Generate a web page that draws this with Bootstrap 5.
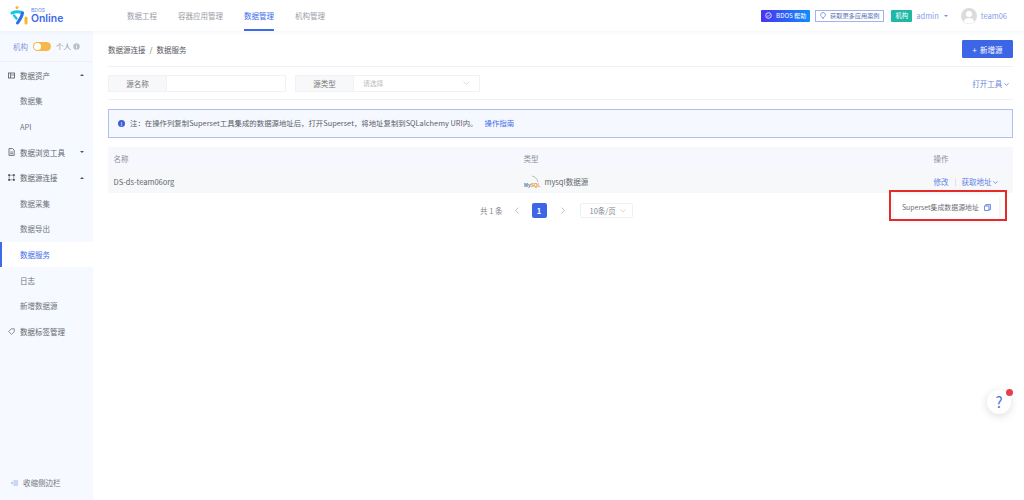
<!DOCTYPE html>
<html lang="zh">
<head>
<meta charset="utf-8">
<title>数据服务</title>
<link rel="stylesheet" href="https://cdn.jsdelivr.net/npm/bootstrap@5.3.0/dist/css/bootstrap.min.css">
<style>
html,body{height:500px;overflow:hidden}
body{font-family:"Noto Sans CJK SC","Noto Sans",sans-serif;font-size:7.5px;color:#55585f;background:#fff;line-height:1.2}
.app-top{height:31px;background:#fff;position:relative;z-index:2;box-shadow:0 1px 5px rgba(60,100,200,.07)}
.logo-box{width:127px;padding-left:10px}
.logo-name{font-family:"Inter",sans-serif;font-size:10.4px;font-weight:600;color:#3d6bea;line-height:10px}
.logo-sup{font-family:"Inter",sans-serif;font-size:5px;color:#5f86ee;line-height:5px;margin-bottom:1px}
.top-nav{gap:21px}
.top-link{height:31px;line-height:32px;color:#999da6;font-size:7.5px;flex:none;text-decoration:none}
.top-link span{display:inline-block;height:31px}
.top-link.on{color:#3d6bea}
.top-link.on span{border-bottom:2px solid #3d6bea}
.help-tag{height:12px;width:49px;background:linear-gradient(90deg,#4a34ee,#0f8dff);color:#fff;border-radius:1px;font-size:6.2px}
.case-tag{height:12px;width:69px;border:1px solid #9fb3f0;color:#5a6fb0;font-size:6.2px;margin-left:5px}
.org-tag{height:12px;width:21px;background:#1fb8a6;color:#fff;border-radius:1px;font-size:6.4px;margin-left:7px}
.user-name{color:#8a9de6;font-size:7.5px}
.avatar{width:16px;height:16px;border-radius:50%;background:#dcdcdc}
.side-bar{width:93px;flex:none;background:#f6f9ff;height:469px;position:relative}
.side-switch{height:31px;border-bottom:1px solid #eef1f8;color:#8c98c4}
.switch-track{width:18px;height:9px;border-radius:5px;background:#f7b84a;position:relative;margin:0 5px}
.switch-track i{position:absolute;left:1px;top:1px;width:7px;height:7px;border-radius:50%;background:#fff}
.side-row{height:25.6px;color:#70737b;padding-left:20px;font-size:7.5px}
.side-row.top{padding-left:8px;color:#63666e}
.side-row.top svg{margin-right:5px;flex:none}
.side-row.active{background:#fff;color:#3d6bea;box-shadow:inset 2px 0 0 #3d6bea}
.caret-up{margin-left:auto;margin-right:9px;width:0;height:0;border-left:2px solid transparent;border-right:2px solid transparent;border-bottom:2px solid #555}
.caret-down{margin-left:auto;margin-right:9px;width:0;height:0;border-left:2px solid transparent;border-right:2px solid transparent;border-top:2px solid #555}
.side-foot{position:absolute;left:11px;bottom:13px;color:#70737b}
.main-area{padding:0 11px 0 15px;position:relative;min-width:0}
.crumb-row{height:36px;border-bottom:1px solid #f1f2f5;padding-top:1px}
.crumb-row .breadcrumb{--bs-breadcrumb-divider-color:#666;--bs-breadcrumb-item-padding-x:4px;font-size:7.5px;color:#55585f}
.crumb-row .breadcrumb-item.active{color:#55585f}
.add-btn{--bs-btn-bg:#3d66e6;--bs-btn-border-color:#3d66e6;--bs-btn-color:#fff;--bs-btn-font-size:7.5px;--bs-btn-padding-x:0;--bs-btn-padding-y:0;--bs-btn-border-radius:1px;width:51px;height:18px;line-height:17px}
.filter-row{height:33px;border-bottom:1px solid #f1f2f5}
.filter-label{background:#f7f8fa;border:1px solid #f1f2f5;border-right:0;height:17px;width:58px;color:#777;flex:none;font-size:7.5px}
.filter-input{width:120px;height:17px;border:1px solid #f1f2f5;flex:none;padding:0 9px;color:#bbb;font-size:6.8px}
.filter-input.wide{width:127px}
.tool-link{color:#6b82dd;font-size:7.5px;margin-right:4px}
.note-box{--bs-alert-padding-x:0;--bs-alert-padding-y:0;--bs-alert-margin-bottom:0;--bs-alert-border-radius:0;background:#f6f8ff;border:1px solid #adbff3;height:29px;margin-top:9px;padding-left:9px;color:#5b5e66;font-size:7.4px}
.note-dot{width:7px;height:7px;border-radius:50%;background:#3d5fd6;color:#fff;font-size:5px;line-height:7px;text-align:center;font-weight:700;margin-right:5px;flex:none}
.note-box a{color:#3d6bea;text-decoration:none;margin-left:7px}
.data-grid{margin:9px 0 0;--bs-table-bg:transparent;--bs-table-border-color:transparent;table-layout:fixed;font-size:7.5px}
.data-grid th{background:#f6f8fd;font-weight:400;color:#8c8f97;height:23px;padding:0 5.5px;vertical-align:middle}
.data-grid td{background:#f7f8fa;color:#63666e;height:23px;padding:0 5.5px;vertical-align:middle}
.link-blue{color:#5f7fe6}
.split-bar{display:inline-block;width:1px;height:8px;background:#dfe2ea;margin:0 6px;vertical-align:-1px}
.pager-row{margin-top:8px;height:18px;color:#83868d}
.page-now{width:15px;height:15px;background:#3d66e6;color:#fff;border-radius:2px;font-weight:700;font-size:7.5px}
.size-pick{width:53px;height:15px;border:1px solid #eef0f4;border-radius:2px;padding:0 6px 0 9px;color:#83868d}
.pager-box{margin-left:372px}
.tip-pop{position:absolute;left:801px;top:164px;width:105px;height:24px;background:#fff;border-radius:2px;box-shadow:0 1px 6px rgba(0,0,0,.1);padding:0 8px;color:#6c6f77;z-index:3;white-space:nowrap;font-size:6.9px}
.red-frame{position:absolute;left:796px;top:159px;width:118px;height:31px;border:2px solid #e62a2a;z-index:4}
.help-fab{position:absolute;left:987px;top:390px;width:24px;height:24px;border-radius:50%;background:#fff;box-shadow:0 2px 8px rgba(0,0,0,.14);color:#4a74e8;font-size:15px;z-index:5;line-height:24px;text-align:center}
.help-fab i{position:absolute;right:-2px;top:-1px;width:7px;height:7px;border-radius:50%;background:#e5404a}
</style>
</head>
<body>
<header class="app-top d-flex align-items-center">
  <div class="logo-box d-flex align-items-center" style="gap:2px">
    <svg width="19" height="21" viewBox="0 0 19 21" fill="none"><path d="M2 8C5 6.500 9 6.500 12 7.500" stroke="#18c3e6" stroke-width="3" stroke-linecap="round"/><path d="M12.500 8C12 12 9.500 15 7.500 18" stroke="#2b6fe8" stroke-width="3" stroke-linecap="round"/><circle cx="7" cy="2.500" r="1.500" fill="#f7b62c"/><path d="M16 13V18" stroke="#f7b62c" stroke-width="3" stroke-linecap="round"/><path d="M4 10.500L6.500 13.500" stroke="#18c3e6" stroke-width="2.400" stroke-linecap="round"/></svg>
    <div><div class="logo-sup">BDOS</div><div class="logo-name">Online</div></div>
  </div>
  <nav class="nav top-nav">
    <a class="top-link" href="#"><span>数据工程</span></a>
    <a class="top-link" href="#"><span>容器应用管理</span></a>
    <a class="top-link on" href="#"><span>数据管理</span></a>
    <a class="top-link" href="#"><span>机构管理</span></a>
  </nav>
  <div class="ms-auto d-flex align-items-center">
    <div class="help-tag d-flex align-items-center justify-content-center gap-1">
      <svg width="7" height="7" viewBox="0 0 8 8" fill="none"><circle cx="4" cy="4" r="3.200" stroke="#fff" stroke-width=".9"/><path d="M2.500 4.200L3.600 5.200 5.600 3" stroke="#fff" stroke-width=".8"/></svg>BDOS 帮助
    </div>
    <div class="case-tag d-flex align-items-center justify-content-center gap-1">
      <svg width="6" height="7" viewBox="0 0 6 7" fill="none"><path d="M3 .6C4.500.6 5.400 1.600 5.400 3 5.400 4.200 4 4.800 3.800 5.600H2.200C2 4.800.6 4.200.6 3 .6 1.600 1.500.6 3 .6Z" stroke="#6f86d8" stroke-width=".8"/><path d="M2.200 6.400H3.800" stroke="#6f86d8" stroke-width=".7"/></svg>获取更多应用案例
    </div>
    <div class="org-tag d-flex align-items-center justify-content-center">机构</div>
    <span class="user-name" style="margin-left:4px">admin</span>
    <span class="caret-down" style="margin:0 0 0 5px;border-top-color:#7b8ed8"></span>
    <svg class="avatar" style="margin-left:13px" viewBox="0 0 16 16"><circle cx="8" cy="6" r="3" fill="#fff"/><path d="M2.800 13.500C3.500 10.800 5.500 10 8 10s4.500.8 5.200 3.500C11.800 15 10 15.700 8 15.700S4.200 15 2.800 13.500Z" fill="#fff"/></svg>
    <span class="user-name" style="margin:0 17px 0 4px">team06</span>
  </div>
</header>
<div class="d-flex">
  <aside class="side-bar">
    <div class="side-switch d-flex align-items-center justify-content-center">
      <span style="color:#7f97e0">机构</span><span class="switch-track"><i></i></span><span style="color:#8a8d95">个人</span>
      <svg width="7" height="7" viewBox="0 0 7 7" style="margin-left:2px"><circle cx="3.500" cy="3.500" r="3.200" fill="#bcbfc6"/><rect x="3.100" y="3" width=".8" height="2.400" fill="#fff"/><rect x="3.100" y="1.600" width=".8" height=".8" fill="#fff"/></svg>
    </div>
    <div style="height:.5px"></div>
    <div class="side-row top d-flex align-items-center"><svg width="7" height="7" viewBox="0 0 7 7" fill="none"><rect x=".5" y="1" width="6" height="5" stroke="#555" stroke-width=".8"/><path d="M2.500 1V6M2.500 3H6.500" stroke="#555" stroke-width=".7"/></svg>数据资产<span class="caret-up"></span></div>
    <div class="side-row d-flex align-items-center">数据集</div>
    <div class="side-row d-flex align-items-center">API</div>
    <div class="side-row top d-flex align-items-center"><svg width="7" height="8" viewBox="0 0 7 8" fill="none"><path d="M1 .6H4.600L6.200 2.200V7.400H1Z" stroke="#555" stroke-width=".8"/><path d="M2.200 4H5M2.200 5.600H5" stroke="#555" stroke-width=".7"/></svg>数据浏览工具<span class="caret-down"></span></div>
    <div class="side-row top d-flex align-items-center"><svg width="7" height="7" viewBox="0 0 7 7" fill="none"><path d="M1.200 1.200H5.800V5.800H1.200Z" stroke="#555" stroke-width=".6"/><rect x=".2" y=".2" width="1.800" height="1.800" fill="#555"/><rect x="5" y=".2" width="1.800" height="1.800" fill="#555"/><rect x=".2" y="5" width="1.800" height="1.800" fill="#555"/><rect x="5" y="5" width="1.800" height="1.800" fill="#555"/></svg>数据源连接<span class="caret-up"></span></div>
    <div class="side-row d-flex align-items-center">数据采集</div>
    <div class="side-row d-flex align-items-center">数据导出</div>
    <div class="side-row active d-flex align-items-center">数据服务</div>
    <div class="side-row d-flex align-items-center">日志</div>
    <div class="side-row d-flex align-items-center">新增数据源</div>
    <div class="side-row top d-flex align-items-center"><svg width="7" height="7" viewBox="0 0 7 7" fill="none"><path d="M.6 3.500L3.200.8H6.300V3.800L3.500 6.400Z" stroke="#777" stroke-width=".8"/></svg>数据标签管理</div>
    <div class="side-foot d-flex align-items-center gap-1"><svg width="7" height="6" viewBox="0 0 7 6" fill="none"><path d="M2.500 1H7M2.500 3H7M2.500 5H7" stroke="#8e9fe6" stroke-width=".8"/><path d="M1.500 1.500L0 3 1.500 4.500Z" fill="#8e9fe6"/></svg><span style="margin-left:1px">收缩侧边栏</span></div>
  </aside>
  <main class="main-area flex-grow-1">
    <div class="crumb-row d-flex align-items-center justify-content-between">
      <ol class="breadcrumb mb-0"><li class="breadcrumb-item">数据源连接</li><li class="breadcrumb-item active">数据服务</li></ol>
      <button class="btn add-btn" type="button">+&nbsp; 新增源</button>
    </div>
    <div class="filter-row d-flex align-items-center">
      <div class="filter-label d-flex align-items-center justify-content-center">源名称</div>
      <div class="filter-input"></div>
      <div class="filter-label d-flex align-items-center justify-content-center" style="margin-left:9px">源类型</div>
      <div class="filter-input wide d-flex align-items-center justify-content-between"><span>请选择</span>
        <svg width="7" height="4" viewBox="0 0 7 4" fill="none"><path d="M.5.500L3.500 3.500 6.500.500" stroke="#c9ccd3" stroke-width=".7"/></svg></div>
      <span class="tool-link ms-auto">打开工具 <svg width="5" height="3" viewBox="0 0 5 3" fill="none" style="vertical-align:1px"><path d="M.4.400L2.500 2.400 4.600.400" stroke="#6b82dd" stroke-width=".8"/></svg></span>
    </div>
    <div class="alert note-box d-flex align-items-center" role="alert">
      <span class="note-dot">!</span><span>注：在操作列复制Superset工具集成的数据源地址后，打开Superset，将地址复制到SQLalchemy URI内。</span><a href="#">操作指南</a>
    </div>
    <table class="table data-grid">
      <colgroup><col style="width:410px"><col><col style="width:85px"></colgroup>
      <thead><tr><th>名称</th><th>类型</th><th>操作</th></tr></thead>
      <tbody><tr>
        <td>DS-ds-team06org</td>
        <td><div class="d-flex align-items-center">
          <svg width="17" height="13" viewBox="0 0 17 13" fill="none" style="margin-right:4px"><path d="M8 1C11 1.500 13 3.500 14 7" stroke="#8aa5b5" stroke-width=".7"/><text x="0" y="12" font-size="4.800" font-weight="700" fill="#4f86ad" font-family="Liberation Sans">My<tspan fill="#e8962e">SQL</tspan></text></svg>
          mysql数据源</div></td>
        <td><span class="link-blue">修改</span><span class="split-bar"></span><span class="link-blue">获取地址 <svg width="5" height="3" viewBox="0 0 5 3" fill="none" style="vertical-align:1px"><path d="M.4.400L2.500 2.400 4.600.400" stroke="#5f7fe6" stroke-width=".8"/></svg></span></td>
      </tr></tbody>
    </table>
    <div class="pager-row d-flex align-items-center pager-box">
      <span>共 1 条</span>
      <svg width="4" height="7" viewBox="0 0 4 7" fill="none" style="margin-left:12px"><path d="M3.500.5L.5 3.500 3.500 6.500" stroke="#b0b4bc" stroke-width=".8"/></svg>
      <span class="page-now d-flex align-items-center justify-content-center" style="margin-left:13px">1</span>
      <svg width="4" height="7" viewBox="0 0 4 7" fill="none" style="margin-left:14px"><path d="M.5.500L3.500 3.500.5 6.500" stroke="#b0b4bc" stroke-width=".8"/></svg>
      <div class="size-pick d-flex align-items-center justify-content-between" style="margin-left:15px"><span>10条/页</span><svg width="6" height="4" viewBox="0 0 6 4" fill="none"><path d="M.5.500L3 3 5.500.500" stroke="#c4c7ce" stroke-width=".7"/></svg></div>
    </div>
    <div class="tip-pop d-flex align-items-center justify-content-between"><span>Superset集成数据源地址</span>
      <svg width="7" height="7" viewBox="0 0 7 7" fill="none"><rect x="2" y=".6" width="4.400" height="4.800" stroke="#5f7fe6" stroke-width=".9"/><rect x=".6" y="2" width="4.400" height="4.400" fill="#fff" stroke="#5f7fe6" stroke-width=".9"/></svg>
    </div>
    <div class="red-frame"></div>
  </main>
</div>
<div class="help-fab">?<i></i></div>
<script src="https://cdn.jsdelivr.net/npm/bootstrap@5.3.0/dist/js/bootstrap.bundle.min.js"></script>
</body>
</html>
